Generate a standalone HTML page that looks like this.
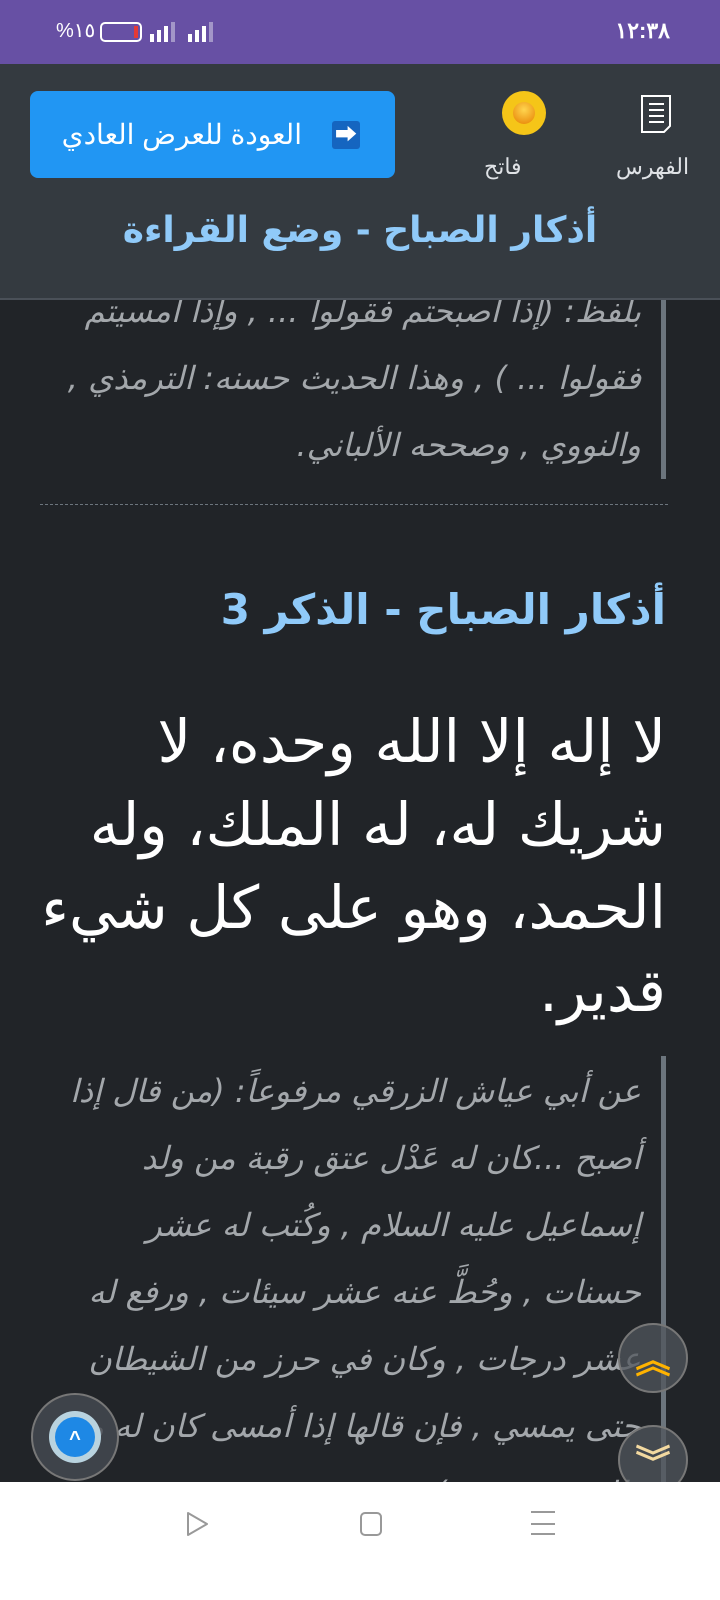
<!DOCTYPE html>
<html><head><meta charset="utf-8"><style>
*{margin:0;padding:0;box-sizing:border-box}
body{width:720px;height:1600px;overflow:hidden;background:#212428;font-family:"Liberation Sans","Noto Sans CJK SC",sans-serif;position:relative}
.status{position:absolute;top:0;left:0;width:720px;height:64px;background:#6750a4;color:#fff;font-size:22px}
.content{position:absolute;top:300px;left:0;width:720px;height:1182px;overflow:hidden}
.q{position:absolute;right:54px;border-right:5px solid #6c757d;padding-right:20px;color:#a3a7ab;font-style:italic;font-size:32px;line-height:67px;direction:rtl;text-align:right;font-family:"DejaVu Sans",sans-serif}
.header{position:absolute;top:64px;left:0;width:720px;height:236px;background:#343a40;border-bottom:2px solid #4a5058}
.btn{position:absolute;left:30px;top:27px;width:365px;height:87px;background:#2196f3;border-radius:8px;color:#fff;font-size:28px;direction:rtl;display:flex;align-items:center;padding-right:35px;gap:30px}
.nav{position:absolute;top:1482px;left:0;width:720px;height:118px;background:#fff}
</style></head><body>
<div class="status">
<div style="position:absolute;right:50px;top:18px;font-size:22px;font-weight:bold">١٢:٣٨</div>
<div style="position:absolute;left:56px;top:18px;font-size:20px">%١٥</div>
<div style="position:absolute;left:100px;top:22px;width:42px;height:20px;border:2px solid #fff;border-radius:5px"><div style="position:absolute;right:2px;top:2px;width:4px;height:12px;background:#e53935"></div></div>
<svg style="position:absolute;left:150px;top:20px" width="70" height="24"><g fill="#fff"><rect x="0" y="14" width="4" height="8"/><rect x="7" y="10" width="4" height="12"/><rect x="14" y="6" width="4" height="16"/><rect x="21" y="2" width="4" height="20" opacity=".4"/><rect x="38" y="14" width="4" height="8"/><rect x="45" y="10" width="4" height="12"/><rect x="52" y="6" width="4" height="16"/><rect x="59" y="2" width="4" height="20" opacity=".4"/></g></svg>
</div>
<div class="content">
<div class="q" style="top:-22px;width:620px">بلفظ: (إذا أصبحتم فقولوا ... , وإذا أمسيتم فقولوا ... ) , وهذا الحديث حسنه: الترمذي , والنووي , وصححه الألباني.</div>
<div style="position:absolute;top:204px;left:40px;width:628px;border-top:1px dashed #6c757d"></div>
<div style="position:absolute;top:285px;right:54px;color:#90caf9;font-size:42px;font-weight:bold;direction:rtl;font-family:'DejaVu Sans',sans-serif">أذكار الصباح - الذكر 3</div>
<div style="position:absolute;top:400px;right:54px;width:636px;color:#fff;font-size:59px;line-height:83px;direction:rtl;text-align:right;font-family:'DejaVu Sans',sans-serif">لا إله إلا الله وحده، لا شريك له، له الملك، وله الحمد، وهو على كل شيء قدير.</div>
<div class="q" style="top:756px;width:620px;padding-top:2px">عن أبي عياش الزرقي مرفوعاً: (من قال إذا أصبح ...كان له عَدْل عتق رقبة من ولد إسماعيل عليه السلام , وكُتب له عشر حسنات , وحُطَّ عنه عشر سيئات , ورفع له عشر درجات , وكان في حرز من الشيطان حتى يمسي , فإن قالها إذا أمسى كان له مثل ذلك حتى يصبح) .</div>
</div>
<div class="header">
<div class="btn"><span style="background:#1565c0;color:#fff;font-size:22px;width:28px;height:28px;display:inline-block;text-align:center;line-height:28px;border-radius:3px">➡</span><span>العودة للعرض العادي</span></div>
<svg style="position:absolute;left:640px;top:30px" width="34" height="40"><path d="M2 2H30V32L24 38H2Z" fill="none" stroke="#fff" stroke-width="2"/><g stroke="#fff" stroke-width="2"><line x1="9" y1="10" x2="24" y2="10"/><line x1="9" y1="16" x2="24" y2="16"/><line x1="9" y1="22" x2="24" y2="22"/><line x1="9" y1="28" x2="24" y2="28"/></g></svg>
<div style="position:absolute;left:502px;top:27px;width:44px;height:44px;border-radius:50%;background:#f5c518;display:flex;align-items:center;justify-content:center"><div style="width:22px;height:22px;border-radius:50%;background:radial-gradient(circle at 50% 35%,#ffd54f,#e67e00)"></div></div>
<div style="position:absolute;left:484px;top:90px;color:#dfe2e6;font-size:22px">فاتح</div>
<div style="position:absolute;left:616px;top:90px;color:#dfe2e6;font-size:22px">الفهرس</div>
<div style="position:absolute;top:146px;left:0;width:720px;text-align:center;color:#90caf9;font-size:36px;font-weight:bold;direction:rtl;font-family:'DejaVu Sans',sans-serif">أذكار الصباح - وضع القراءة</div>
</div>
<div style="position:absolute;left:618px;top:1323px;width:70px;height:70px;border-radius:50%;background:rgba(80,85,92,.75);border:2px solid #777;display:flex;align-items:center;justify-content:center;color:#ffb300;font-size:36px;font-weight:bold">︽</div>
<div style="position:absolute;left:618px;top:1425px;width:70px;height:70px;border-radius:50%;background:rgba(80,85,92,.75);border:2px solid #777;display:flex;align-items:center;justify-content:center;color:#f3d9a0;font-size:36px;font-weight:bold">︾</div>
<div style="position:absolute;left:31px;top:1393px;width:88px;height:88px;border-radius:50%;background:rgba(70,75,82,.8);border:2px solid #777;display:flex;align-items:center;justify-content:center"><div style="width:40px;height:40px;border-radius:50%;background:#1e88e5;color:#fff;text-align:center;line-height:44px;font-size:20px;font-weight:bold;box-shadow:0 0 0 6px #b9d3df">^</div></div>
<div class="nav">
<svg style="position:absolute;left:186px;top:28px" width="24" height="30"><path d="M2 3L21 14L2 25Z" fill="none" stroke="#999" stroke-width="2" stroke-linejoin="round"/></svg>
<div style="position:absolute;left:360px;top:30px;width:22px;height:24px;border:2px solid #999;border-radius:5px"></div>
<div style="position:absolute;left:531px;top:29px;width:24px;height:24px;border-top:2px solid #999;border-bottom:2px solid #999"><div style="margin-top:10px;border-top:2px solid #999"></div></div>
</div>
</body></html>
